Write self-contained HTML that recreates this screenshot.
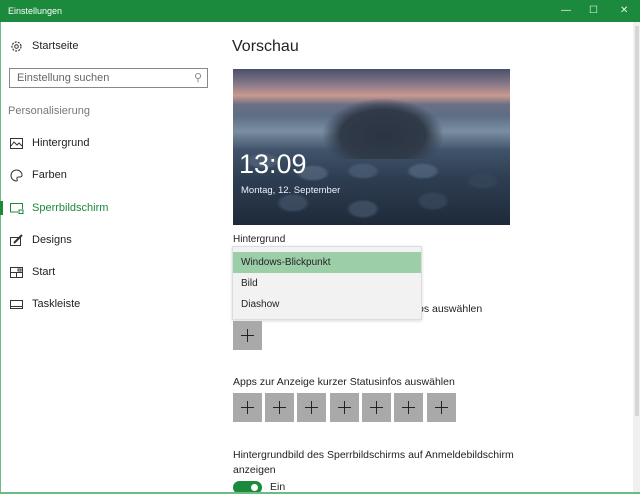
<!DOCTYPE html>
<html><head><meta charset="utf-8"><style>
*{margin:0;padding:0;box-sizing:border-box}
body{width:640px;height:494px;overflow:hidden;background:#fff;font-family:"Liberation Sans",sans-serif;color:#222;position:relative}
.tb{position:absolute;left:0;top:0;width:640px;height:22px;background:#1c8a3c;color:#fff;font-size:9px;line-height:22px;padding-left:8px}
.tb .c{position:absolute;top:0;color:#e8f4ec;font-size:10px}
.lb{position:absolute;left:0;top:22px;width:1px;height:472px;background:#6cba84}
.bb{position:absolute;left:0;top:492px;width:640px;height:2px;background:#6cba84}
.sb{position:absolute;left:633px;top:22px;width:7px;height:470px;background:#f0f0f0}
.sb div{position:absolute;left:2px;top:4px;width:4px;height:390px;background:#d6d6d6}
.t{position:absolute;font-size:11px;white-space:nowrap}
.nav svg{position:absolute;left:10px}
.search{position:absolute;left:9px;top:68px;width:199px;height:20px;border:1px solid #888;font-size:11px;color:#666;line-height:18px;padding-left:7px}
.img{position:absolute;left:233px;top:69px;width:277px;height:156px;overflow:hidden;
background:linear-gradient(180deg,#4a506a 0%,#8a7a8a 10%,#c99a8e 17%,#6a6e86 23%,#5e6e84 30%,#7a8ea2 40%,#40536a 52%,#2e3e52 70%,#1e2a3a 100%)}
.rock{position:absolute;left:90px;top:30px;width:120px;height:60px;background:radial-gradient(ellipse at 50% 60%,#2a3442 0%,#303a48 50%,transparent 72%)}
.hex{position:absolute;left:0;top:72px;width:277px;height:84px;opacity:.6;background:
radial-gradient(ellipse 24px 12px at 30px 20px,#5a6a80 50%,transparent 70%),
radial-gradient(ellipse 24px 12px at 80px 32px,#607088 50%,transparent 70%),
radial-gradient(ellipse 24px 12px at 130px 30px,#52647c 50%,transparent 70%),
radial-gradient(ellipse 24px 14px at 60px 62px,#4a5a70 50%,transparent 70%),
radial-gradient(ellipse 24px 14px at 130px 68px,#4e5e74 50%,transparent 70%),
radial-gradient(ellipse 24px 14px at 200px 60px,#3e4e62 50%,transparent 70%),
radial-gradient(ellipse 24px 12px at 190px 30px,#5a708a 50%,transparent 70%),
radial-gradient(ellipse 24px 12px at 250px 40px,#3a4a5e 50%,transparent 70%)}
.clock{position:absolute;left:6px;top:80px;color:#fff;font-size:27px;font-weight:300}
.date{position:absolute;left:8px;top:116px;color:#eef;font-size:9.5px}
.dd{position:absolute;left:232px;top:246px;width:190px;height:74px;background:#f2f2f2;border:1px solid #ddd;box-shadow:0 1px 3px rgba(0,0,0,.15)}
.dd div{height:21px;line-height:21px;padding-left:8px;font-size:10px;margin-top:0}
.plus{position:absolute;width:29px;height:29px;background:#a9a9a9}
.plus:before{content:"";position:absolute;left:8px;top:14px;width:13px;height:1px;background:#222}
.plus:after{content:"";position:absolute;left:14px;top:8px;width:1px;height:13px;background:#222}
.tog{position:absolute;left:233px;top:481px;width:29px;height:13px;border-radius:7px;background:#1c8a3c}
.tog div{position:absolute;right:4px;top:3px;width:7px;height:7px;border-radius:50%;background:#fff}
</style></head><body>
<div class="tb">Einstellungen<span class="c" style="left:561px">—</span><span class="c" style="left:589px">☐</span><span class="c" style="left:620px">✕</span></div>
<div class="lb"></div><div class="sb"><div></div></div>

<div class="nav">
<svg style="top:40px" width="13" height="13" viewBox="0 0 13 13"><circle cx="6.5" cy="6.5" r="4.5" fill="none" stroke="#333" stroke-width="1.2" stroke-dasharray="2 1.2"/><circle cx="6.5" cy="6.5" r="1.8" fill="none" stroke="#333"/></svg>
<div class="t" style="left:32px;top:40px">Startseite</div>
<div class="search">Einstellung suchen<span style="position:absolute;right:5px;top:0;color:#888">⚲</span></div>
<div class="t" style="left:8px;top:105px;color:#777">Personalisierung</div>
<svg style="top:138px" width="13" height="11" viewBox="0 0 13 11"><rect x=".5" y=".5" width="12" height="10" fill="none" stroke="#333"/><path d="M1 8l3-4 3 3 2-2 3 3" fill="none" stroke="#333"/></svg>
<div class="t" style="left:32px;top:137px">Hintergrund</div>
<svg style="top:169px" width="13" height="13" viewBox="0 0 13 13"><path d="M6.5 1a5.5 5.5 0 1 0 0 11c1 0 1-1 .5-2s0-2 1.5-2h2A2 2 0 0 0 12 6 5.5 5 0 0 0 6.5 1z" fill="none" stroke="#333"/></svg>
<div class="t" style="left:32px;top:169px">Farben</div>
<div style="position:absolute;left:0;top:201px;width:3px;height:14px;background:#1c8a3c"></div>
<svg style="top:203px" width="14" height="11" viewBox="0 0 14 11"><path d="M8 9H.5V.5h12V6" fill="none" stroke="#1c8a3c"/><rect x="9" y="7" width="4" height="3.5" fill="none" stroke="#1c8a3c"/></svg>
<div class="t" style="left:32px;top:202px;color:#1c8a3c">Sperrbildschirm</div>
<svg style="top:234px" width="14" height="12" viewBox="0 0 14 12"><rect x=".5" y="3.5" width="10" height="8" fill="none" stroke="#333"/><path d="M4 9l8-8" stroke="#333" stroke-width="2"/></svg>
<div class="t" style="left:32px;top:234px">Designs</div>
<svg style="top:267px" width="13" height="11" viewBox="0 0 13 11"><rect x=".5" y=".5" width="12" height="10" fill="none" stroke="#333"/><path d="M.5 5.5h12M6.5 5.5v5M8 2h3v2H8z" stroke="#333" fill="none"/></svg>
<div class="t" style="left:32px;top:266px">Start</div>
<svg style="top:300px" width="13" height="9" viewBox="0 0 13 9"><rect x=".5" y=".5" width="12" height="8" fill="none" stroke="#333"/><path d="M.5 6.5h12" stroke="#333"/></svg>
<div class="t" style="left:32px;top:298px">Taskleiste</div>
</div>

<div class="t" style="left:232px;top:38px;font-size:16px">Vorschau</div>
<div class="img"><div class="rock"></div><div class="hex"></div><div class="clock">13:09</div><div class="date">Montag, 12. September</div></div>
<div class="t" style="left:233px;top:234px;font-size:10px">Hintergrund</div>
<div class="t" style="left:418px;top:303px;font-size:10.5px">os auswählen</div>
<div class="dd"><div style="background:#9ccfa8;margin-top:5px">Windows-Blickpunkt</div><div>Bild</div><div>Diashow</div></div>
<div class="plus" style="left:233px;top:321px"></div>
<div class="t" style="left:233px;top:376px;font-size:10.5px">Apps zur Anzeige kurzer Statusinfos auswählen</div>
<div class="plus" style="left:233px;top:393px"></div>
<div class="plus" style="left:265px;top:393px"></div>
<div class="plus" style="left:297px;top:393px"></div>
<div class="plus" style="left:330px;top:393px"></div>
<div class="plus" style="left:362px;top:393px"></div>
<div class="plus" style="left:394px;top:393px"></div>
<div class="plus" style="left:427px;top:393px"></div>
<div class="t" style="left:233px;top:448px;font-size:10.5px;line-height:15px">Hintergrundbild des Sperrbildschirms auf Anmeldebildschirm<br>anzeigen</div>
<div class="tog"><div></div></div>
<div class="t" style="left:270px;top:481px;font-size:10.5px">Ein</div>
<div class="bb"></div>
</body></html>
